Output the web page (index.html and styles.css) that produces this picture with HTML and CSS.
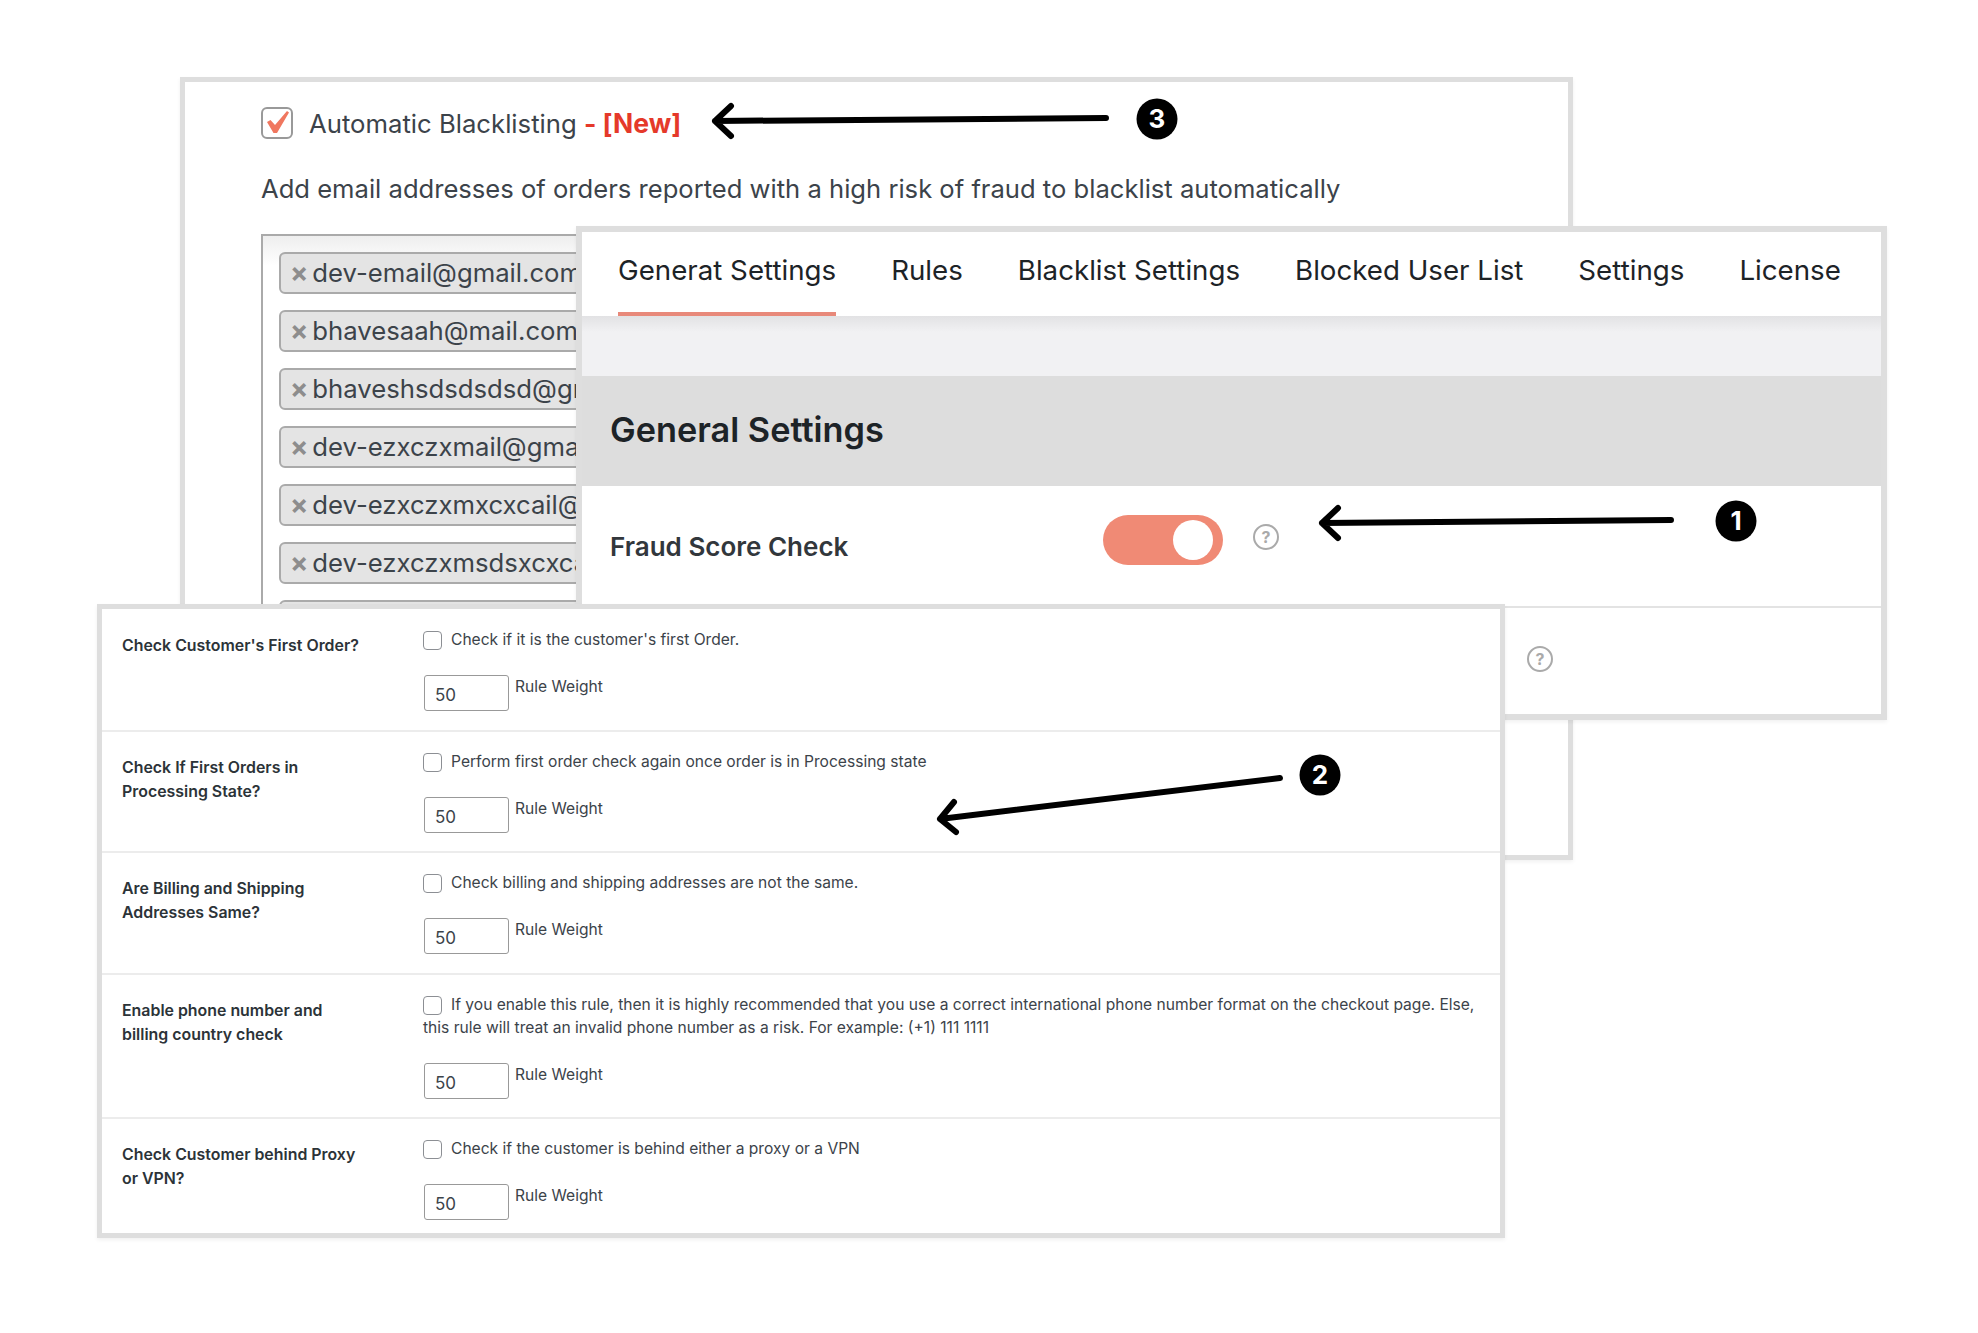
FILE: index.html
```html
<!DOCTYPE html>
<html lang="en">
<head>
  <meta charset="UTF-8" />
  <title>Fraud settings</title>
  <link rel="stylesheet" href="styles.css">
</head>
<body>
  <div class="canvas">

    <!-- back window: blacklist -->
    <section class="window blacklist">
      <div class="auto-row">
        <span class="big-check">
          <svg width="26" height="26" viewBox="0 0 26 26"><path d="M3 12 L6.5 10 L11 15 L23 1 L25 2.5 L13 23 L9.5 23 Z" fill="#f0775f"/></svg>
        </span>
        <span class="auto-label">Automatic Blacklisting <b class="new-tag">- [New]</b></span>
      </div>
      <p class="auto-desc">Add email addresses of orders reported with a high risk of fraud to blacklist automatically</p>
      <div class="chip-box">
        <div class="chip"><span class="chip-x">×</span>dev-email@gmail.com</div>
        <div class="chip"><span class="chip-x">×</span>bhavesaah@mail.com</div>
        <div class="chip"><span class="chip-x">×</span>bhaveshsdsdsdsd@gmail.com</div>
        <div class="chip"><span class="chip-x">×</span>dev-ezxczxmail@gmail.com</div>
        <div class="chip"><span class="chip-x">×</span>dev-ezxczxmxcxcail@gmail.com</div>
        <div class="chip"><span class="chip-x">×</span>dev-ezxczxmsdsxcxcail@gmail.com</div>
        <div class="chip"></div>
      </div>
    </section>

    <!-- middle window: tabs -->
    <section class="window general">
      <nav class="tabs">
        <a class="tab active">Generat Settings</a>
        <a class="tab">Rules</a>
        <a class="tab">Blacklist Settings</a>
        <a class="tab">Blocked User List</a>
        <a class="tab">Settings</a>
        <a class="tab">License</a>
      </nav>
      <div class="tab-gap"></div>
      <h2 class="section-title">General Settings</h2>
      <div class="fraud-row">
        <span class="fraud-label">Fraud Score Check</span>
        <span class="toggle"><span class="knob"></span></span>
        <span class="help">?</span>
      </div>
      <div class="second-row">
        <span class="help">?</span>
      </div>
    </section>

    <!-- front window: rules -->
    <section class="window rules">
      <div class="rule">
        <div class="rule-name">Check Customer's First Order?</div>
        <div class="rule-body">
          <div class="rule-check"><span class="box"></span>Check if it is the customer's first Order.</div>
          <div class="weight"><span class="weight-input">50</span><span>Rule Weight</span></div>
        </div>
      </div>
      <div class="rule">
        <div class="rule-name">Check If First Orders in<br>Processing State?</div>
        <div class="rule-body">
          <div class="rule-check"><span class="box"></span>Perform first order check again once order is in Processing state</div>
          <div class="weight"><span class="weight-input">50</span><span>Rule Weight</span></div>
        </div>
      </div>
      <div class="rule">
        <div class="rule-name">Are Billing and Shipping<br>Addresses Same?</div>
        <div class="rule-body">
          <div class="rule-check"><span class="box"></span>Check billing and shipping addresses are not the same.</div>
          <div class="weight"><span class="weight-input">50</span><span>Rule Weight</span></div>
        </div>
      </div>
      <div class="rule">
        <div class="rule-name">Enable phone number and<br>billing country check</div>
        <div class="rule-body">
          <div class="rule-check"><span class="box"></span>If you enable this rule, then it is highly recommended that you use a correct international phone number format on the checkout page. Else, this rule will treat an invalid phone number as a risk. For example: (+1) 111 1111</div>
          <div class="weight"><span class="weight-input">50</span><span>Rule Weight</span></div>
        </div>
      </div>
      <div class="rule last">
        <div class="rule-name">Check Customer behind Proxy<br>or VPN?</div>
        <div class="rule-body">
          <div class="rule-check"><span class="box"></span>Check if the customer is behind either a proxy or a VPN</div>
          <div class="weight"><span class="weight-input">50</span><span>Rule Weight</span></div>
        </div>
      </div>
    </section>

    <!-- arrows and numbers drawn over the windows -->
    <svg class="marks" width="1978" height="1333" viewBox="0 0 1978 1333">
      <g fill="none" stroke="#000" stroke-width="6" stroke-linecap="round" stroke-linejoin="round">
        <path d="M1106 118 L715 121 M731 106 L715 121 L731 136" />
        <path d="M1671 520 L1322 523 M1338 508 L1322 523 L1338 538" />
        <path d="M1280 778 L940 819 M954 802 L940 819 L956 832" />
      </g>
      <circle cx="1157" cy="119" r="20.5" />
      <circle cx="1736" cy="521" r="20.5" />
      <circle cx="1320" cy="775" r="20.5" />
      <g class="mark-num">
        <text x="1157" y="128">3</text>
        <text x="1736" y="530">1</text>
        <text x="1320" y="784">2</text>
      </g>
    </svg>
  </div>
</body>
</html>
```

FILE: styles.css
```css
body {
  margin: 0;
  background: white;
  font-family: Inter, 'Noto Sans', sans-serif;
  color: #3c434a;
}
.canvas {
  position: relative;
  width: 1978px;
  height: 1333px;
  overflow: hidden;
}
.window {
  position: absolute;
  box-sizing: border-box;
  background: white;
  border: 5px solid #dedede;
  overflow: hidden;
  box-shadow: 0 2px 4px rgba(0,0,0,0.06);
}
.marks {
  position: absolute;
  left: 0;
  top: 0;
}
.mark-num text {
  fill: white;
  font-family: Inter, sans-serif;
  font-size: 26px;
  font-weight: 700;
  text-anchor: middle;
}

/* blacklist window */
.blacklist {
  left: 180px;
  top: 77px;
  width: 1393px;
  height: 783px;
  padding: 23px 0 0 76px;
}
.auto-row {
  display: flex;
  align-items: center;
  gap: 16px;
  height: 36px;
}
.big-check {
  box-sizing: border-box;
  width: 32px;
  height: 32px;
  border: 2px solid #999;
  border-radius: 6px;
  display: flex;
  align-items: center;
  justify-content: center;
}
.auto-label {
  font-size: 25.7px;
}
.new-tag {
  color: #e5392a;
  font-size: 26.5px;
  font-weight: 700;
}
.auto-desc {
  margin: 30px 0 0;
  font-size: 25.6px;
  line-height: 36px;
}
.chip-box {
  box-sizing: border-box;
  width: 500px;
  height: 700px;
  margin-top: 27px;
  padding: 16px 0 0 16px;
  border: 2px solid #aaa;
  background: linear-gradient(#eee, white 30px);
}
.chip {
  box-sizing: border-box;
  width: 400px;
  height: 42px;
  margin-bottom: 16px;
  padding-left: 9px;
  border: 2px solid #aaa;
  border-radius: 6px;
  background: #e4e4e4;
  font-size: 25.7px;
  line-height: 38px;
  white-space: nowrap;
  overflow: hidden;
}
.chip-x {
  color: #8d8d8d;
  font-weight: 700;
  font-size: 27px;
  margin-right: 4px;
}

/* tabs window */
.general {
  left: 576px;
  top: 226px;
  width: 1311px;
  height: 494px;
  border-width: 6px;
}
.tabs {
  display: flex;
  gap: 55px;
  height: 84px;
  padding-left: 36px;
}
.tab {
  box-sizing: border-box;
  height: 84px;
  padding-top: 20px;
  font-size: 27.7px;
  line-height: 36px;
  color: #1d2327;
}
.tab.active {
  border-bottom: 4px solid #e8897a;
}
.tab-gap {
  height: 60px;
  background: linear-gradient(#e2e2e4, #f1f1f3 16px);
}
.section-title {
  margin: 0;
  height: 110px;
  padding-left: 28px;
  background: #dddddd;
  font-size: 34.3px;
  font-weight: 600;
  line-height: 108px;
  color: #1d2327;
}
.fraud-row {
  display: flex;
  height: 120px;
  padding-left: 28px;
  border-bottom: 2px solid #e3e3e3;
}
.fraud-label {
  width: 493px;
  margin-top: 46px;
  font-size: 26px;
  font-weight: 600;
  line-height: 30px;
  color: #32373c;
}
.toggle {
  box-sizing: border-box;
  display: flex;
  justify-content: flex-end;
  align-items: center;
  width: 120px;
  height: 50px;
  margin-top: 29px;
  padding-right: 10px;
  border-radius: 25px;
  background: #f08a75;
}
.knob {
  width: 40px;
  height: 40px;
  border-radius: 50%;
  background: white;
}
.help {
  box-sizing: border-box;
  display: flex;
  align-items: center;
  justify-content: center;
  width: 26px;
  height: 26px;
  margin: 38px 0 0 30px;
  border: 2.5px solid #aaa;
  border-radius: 50%;
  color: #aaa;
  font-size: 16px;
  font-weight: 700;
}
.second-row {
  display: flex;
  padding-left: 945px;
}
.second-row .help {
  margin: 38px 0 0 0;
}

/* rules window */
.rules {
  left: 97px;
  top: 604px;
  width: 1408px;
  height: 634px;
  padding-top: 1px;
}
.rule {
  display: grid;
  grid-template-columns: 300px 1060px;
  padding: 18px 0 18.5px 20px;
  border-bottom: 2px solid #ececec;
  font-size: 15.6px;
  line-height: 23px;
}
.rule.last {
  border-bottom: 0;
  padding-bottom: 0;
}
.rule-name {
  margin-top: 6px;
  font-size: 15.9px;
  font-weight: 600;
  line-height: 24px;
  color: #2c3338;
}
.rule-body {
  padding-left: 1px;
}
.rule-check {
  margin-bottom: 24px;
}
.box {
  box-sizing: border-box;
  display: inline-block;
  width: 19px;
  height: 19px;
  margin-right: 9px;
  border: 1.5px solid #8c8f94;
  border-radius: 4px;
  vertical-align: -5px;
}
.weight {
  display: flex;
  gap: 6px;
}
.weight-input {
  box-sizing: border-box;
  width: 85px;
  height: 36px;
  margin-left: 1px;
  padding: 7px 0 0 10px;
  border: 1.5px solid #999;
  border-radius: 3px;
  font-size: 17px;
  line-height: 24px;
}
```
